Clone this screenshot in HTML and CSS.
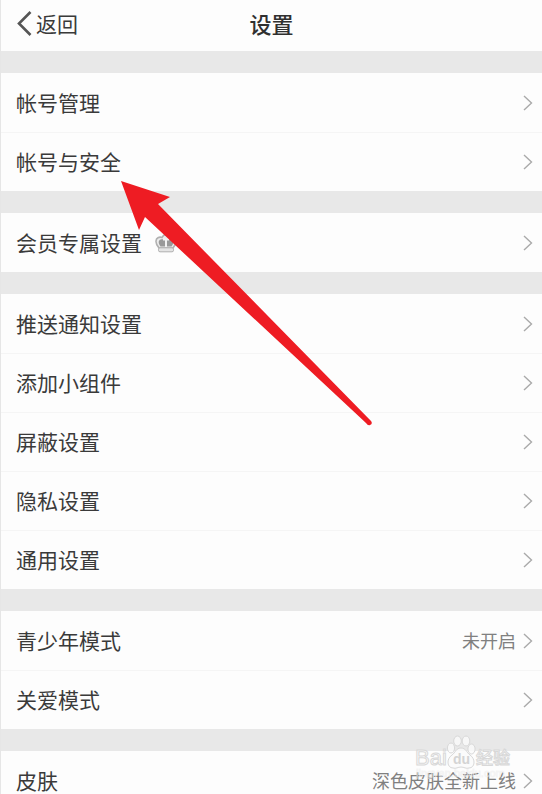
FILE: index.html
```html
<!DOCTYPE html>
<html lang="zh-CN">
<head>
    <meta charset="UTF-8">
    <meta name="viewport" content="width=device-width, initial-scale=1.0">
    <title>设置</title>
    <link rel="stylesheet" href="styles.css">
</head>
<body>

    <svg class="symbols" aria-hidden="true">
        <symbol id="chevron" viewBox="0 0 10 16">
            <path d="M1 1 L8.5 8 L1 15" fill="none" stroke="currentColor" stroke-width="1.4"/>
        </symbol>
    </svg>

    <header class="header">
        <a class="back" href="#">
            <svg class="back-icon" viewBox="0 0 15 25" aria-hidden="true">
                <path d="M13.5 1 L2 12.5 L13.5 24" fill="none" stroke="currentColor" stroke-width="2.6"/>
            </svg>
            <span class="label">返回</span>
        </a>
        <h1 class="title">设置</h1>
    </header>

    <main class="settings">
        <nav class="group">
            <a class="row" href="#"><span class="label">帐号管理</span><svg class="chevron"><use href="#chevron"/></svg></a>
            <a class="row" href="#"><span class="label">帐号与安全</span><svg class="chevron"><use href="#chevron"/></svg></a>
        </nav>

        <nav class="group">
            <a class="row" href="#">
                <span class="label">会员专属设置</span>
                <svg class="crown" viewBox="0 0 22 20" aria-hidden="true">
                    <path d="M4 15 C1.5 12 0.8 10.5 1 8 C1.2 5 4 3.5 7 4.5 C8 2.5 9.5 1.5 11 1.5 C12.5 1.5 14 2.5 15 4.5 C18 3.5 20.8 5 21 8 C21.2 10.5 20.5 12 18 15 Z" fill="#ececec" stroke="#b0b0b0" stroke-width="1.6"/>
                    <path d="M5.5 13.5 C2.5 9.5 3.5 6.5 6.5 6.2 H15.5 C18.5 6.5 19.5 9.5 16.5 13.5 Z" fill="#999"/>
                    <path d="M8 6.5 H14 M11 6 V14" fill="none" stroke="#f2f2f2" stroke-width="2"/>
                    <rect x="3.5" y="14.8" width="15" height="4" rx="1.5" fill="#e4e4e4" stroke="#b0b0b0"/>
                </svg>
                <svg class="chevron"><use href="#chevron"/></svg>
            </a>
        </nav>

        <nav class="group">
            <a class="row" href="#"><span class="label">推送通知设置</span><svg class="chevron"><use href="#chevron"/></svg></a>
            <a class="row" href="#"><span class="label">添加小组件</span><svg class="chevron"><use href="#chevron"/></svg></a>
            <a class="row" href="#"><span class="label">屏蔽设置</span><svg class="chevron"><use href="#chevron"/></svg></a>
            <a class="row" href="#"><span class="label">隐私设置</span><svg class="chevron"><use href="#chevron"/></svg></a>
            <a class="row" href="#"><span class="label">通用设置</span><svg class="chevron"><use href="#chevron"/></svg></a>
        </nav>

        <nav class="group">
            <a class="row" href="#"><span class="label">青少年模式</span><span class="value">未开启</span><svg class="chevron"><use href="#chevron"/></svg></a>
            <a class="row" href="#"><span class="label">关爱模式</span><svg class="chevron"><use href="#chevron"/></svg></a>
        </nav>

        <nav class="group">
            <a class="row" href="#"><span class="label">皮肤</span><span class="value">深色皮肤全新上线</span><svg class="chevron"><use href="#chevron"/></svg></a>
        </nav>
    </main>

    <!-- flecha que señala la opción -->
    <svg class="arrow" viewBox="0 0 252 246" aria-hidden="true">
        <path d="M0 0 L49 16 L37 23 L250 240 Q252 243 249 244 Q247 245 245 242 L24 36 L18 49 Z" fill="#ee1c23"/>
    </svg>

    <!-- marca de agua -->
    <svg class="watermark" viewBox="0 0 100 48" aria-hidden="true">
        <g class="mark">
            <text x="1" y="31" font-size="22">Bai</text>
            <text x="62" y="30" font-size="17">经验</text>
            <ellipse cx="37" cy="14" rx="3.6" ry="5"/>
            <ellipse cx="43.5" cy="7" rx="3.8" ry="5"/>
            <ellipse cx="52" cy="7" rx="3.8" ry="5"/>
            <ellipse cx="57.5" cy="15" rx="3.6" ry="5"/>
            <path d="M47 14 C42 14 41 19 38 21 C32 25 33 34 39 34 C42 35 44 33 47 33 C50 33 52 35 55 34 C61 34 62 25 56 21 C53 19 52 14 47 14 Z"/>
        </g>
        <text class="du" x="39" y="30" font-size="14">du</text>
        <text class="url" x="2" y="43" font-size="11">jingyan.baidu.com</text>
    </svg>

</body>
</html>
```

FILE: styles.css
```css
* {
    box-sizing: border-box;
}
body, html {
    margin: 0;
    padding: 0;
    height: 100%;
    overflow: hidden;
}
body {
    position: relative;
    background-color: #fdfdfd;
    color: #3a3a3a;
    font-family: "Noto Sans CJK SC", sans-serif;
    font-size: 21px;
    line-height: 30px;
    border-left: 1px solid #e6e6e6;
}
a {
    color: inherit;
    text-decoration: none;
}
.symbols {
    display: none;
}

/* Cabecera */
.header {
    display: grid;
    grid-template-columns: 1fr auto 1fr;
    align-items: center;
    height: 51px;
    padding: 0 16px 4px;
}
.back {
    display: flex;
    align-items: center;
    gap: 4px;
}
.back-icon {
    width: 15px;
    height: 25px;
    color: #555;
}
.title {
    margin: 0;
    padding-bottom: 2px;
    color: #303030;
    font-size: 22px;
    font-weight: 500;
    line-height: 30px;
}

/* Lista de opciones */
.group {
    border-top: 22px solid #e8e8e8;
}
.row {
    display: flex;
    align-items: center;
    height: 59px;
    padding: 0 9px 0 15px;
}
.row + .row {
    border-top: 1px solid #f5f5f5;
}
.label {
    padding-bottom: 2px;
}
.crown {
    width: 22px;
    height: 20px;
    margin-left: 13px;
}
.value {
    margin-left: auto;
    padding-bottom: 2px;
    color: #808080;
    font-size: 18px;
}
.chevron {
    width: 10px;
    height: 16px;
    margin-left: auto;
    color: #aaa;
}
.value + .chevron {
    margin-left: 7px;
}

/* Elementos superpuestos */
.arrow {
    position: absolute;
    top: 181px;
    left: 120px;
    width: 252px;
    height: 246px;
}
.watermark {
    position: absolute;
    right: 28px;
    bottom: 12px;
    width: 100px;
    height: 48px;
    font-family: "Liberation Sans", "Noto Sans CJK SC", sans-serif;
    font-weight: bold;
}
.mark {
    fill: #fafafa;
    fill-opacity: 0.8;
    stroke: #d8d8d8;
    stroke-width: 1px;
}
.mark text {
    font-weight: 500;
}
.du {
    fill: #d4d4d4;
}
.url {
    fill: #fff;
    fill-opacity: 0.5;
    font-weight: normal;
    stroke: #ddd;
    stroke-opacity: 0.3;
    stroke-width: 1px;
}
```
